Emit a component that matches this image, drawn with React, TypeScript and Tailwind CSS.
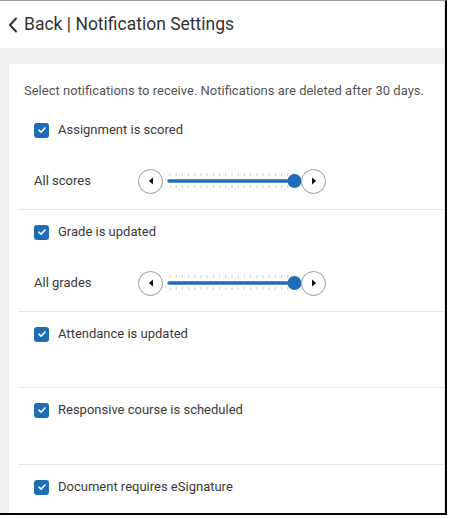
import React from "react"

const font = { fontFamily: "Roboto, 'Noto Sans', Arial, sans-serif" }

function Checkbox() {
  return (
    <span className="flex h-[15px] w-[15px] items-center justify-center rounded-[3px] bg-[#1f6db6]">
      <svg width="10" height="10" viewBox="0 0 10 10" fill="none">
        <path d="M2 5.2 L4.1 7.2 L8 3" stroke="white" strokeWidth="1.6" strokeLinecap="round" strokeLinejoin="round" />
      </svg>
    </span>
  )
}

function CheckRow({ label }: { label: string }) {
  return (
    <div className="flex h-5 items-center gap-[9px] pl-[25px]">
      <Checkbox />
      <span className="text-[13px] text-[#3a3a3a]">{label}</span>
    </div>
  )
}

function ArrowButton({ dir }: { dir: "left" | "right" }) {
  return (
    <span className="flex h-[25px] w-[25px] shrink-0 items-center justify-center rounded-full border border-[#9a9a9a] bg-white">
      <svg width="6" height="8" viewBox="0 0 6 8">
        {dir === "left" ? <path d="M5 0.5 L0.8 4 L5 7.5 Z" fill="#111" /> : <path d="M1 0.5 L5.2 4 L1 7.5 Z" fill="#111" />}
      </svg>
    </span>
  )
}

function Slider({ label }: { label: string }) {
  const ticks = Array.from({ length: 21 }, (_, i) => 8 + i * 6.2)
  return (
    <div className="flex h-[26px] items-center pl-[25px]">
      <span className="w-[104px] text-[13px] text-[#3a3a3a]">{label}</span>
      <ArrowButton dir="left" />
      <svg width="140" height="26" viewBox="0 0 140 26" className="-mx-[1px] block">
        {ticks.map((x) => (
          <g key={x}>
            <line x1={x} y1="5" x2={x} y2="8" stroke="#cfcfcf" strokeWidth="1" />
            <line x1={x} y1="17" x2={x} y2="20" stroke="#cfcfcf" strokeWidth="1" />
          </g>
        ))}
        <line x1="7" y1="13" x2="132" y2="13" stroke="#1f6db6" strokeWidth="3.5" strokeLinecap="round" />
        <circle cx="132.5" cy="13" r="7" fill="#1f6db6" />
      </svg>
      <ArrowButton dir="right" />
    </div>
  )
}

export default function App() {
  return (
    <div className="h-[519px] w-[456px] bg-white" style={font}>
      <div className="flex h-[515px] w-[447px] flex-col overflow-hidden border-t border-r-2 border-b-2 border-t-[#9a9a9a] border-r-black border-b-black">
        <div className="flex h-full flex-col border-r border-[#e6e6e6]">
          {/* header */}
          <div className="flex h-[47px] shrink-0 items-center gap-[6px] bg-white pl-[8px]">
            <svg width="10" height="16" viewBox="0 0 10 16" fill="none">
              <path d="M8 1.5 L2 8 L8 14.5" stroke="#333" strokeWidth="2" strokeLinecap="round" strokeLinejoin="round" />
            </svg>
            <span className="text-[17.5px] text-[#333]">Back | Notification Settings</span>
          </div>

          <div className="flex flex-1 flex-col bg-[#f1f1f1] pt-4 pl-[9px]">
            <div className="flex-1 bg-white">
              {/* first section */}
              <div className="flex h-[145px] flex-col pt-[19px]">
                <p className="pl-[15px] text-[13px] leading-4 text-[#555]">
                  Select notifications to receive. Notifications are deleted after 30 days.
                </p>
                <div className="mt-[21px]">
                  <CheckRow label="Assignment is scored" />
                </div>
                <div className="mt-[28px]">
                  <Slider label="All scores" />
                </div>
              </div>

              <div className="ml-[9px] flex h-[102px] flex-col border-t border-[#e6e6e6] pt-[12px]">
                <div className="-ml-[9px]">
                  <CheckRow label="Grade is updated" />
                  <div className="mt-[28px]">
                    <Slider label="All grades" />
                  </div>
                </div>
              </div>

              <div className="ml-[9px] h-[76px] border-t border-[#e6e6e6] pt-[12px]">
                <div className="-ml-[9px]">
                  <CheckRow label="Attendance is updated" />
                </div>
              </div>

              <div className="ml-[9px] h-[77px] border-t border-[#e6e6e6] pt-[12px]">
                <div className="-ml-[9px]">
                  <CheckRow label="Responsive course is scheduled" />
                </div>
              </div>

              <div className="ml-[9px] h-[77px] border-t border-[#e6e6e6] pt-[12px]">
                <div className="-ml-[9px]">
                  <CheckRow label="Document requires eSignature" />
                </div>
              </div>
            </div>
          </div>
        </div>
      </div>
    </div>
  )
}
